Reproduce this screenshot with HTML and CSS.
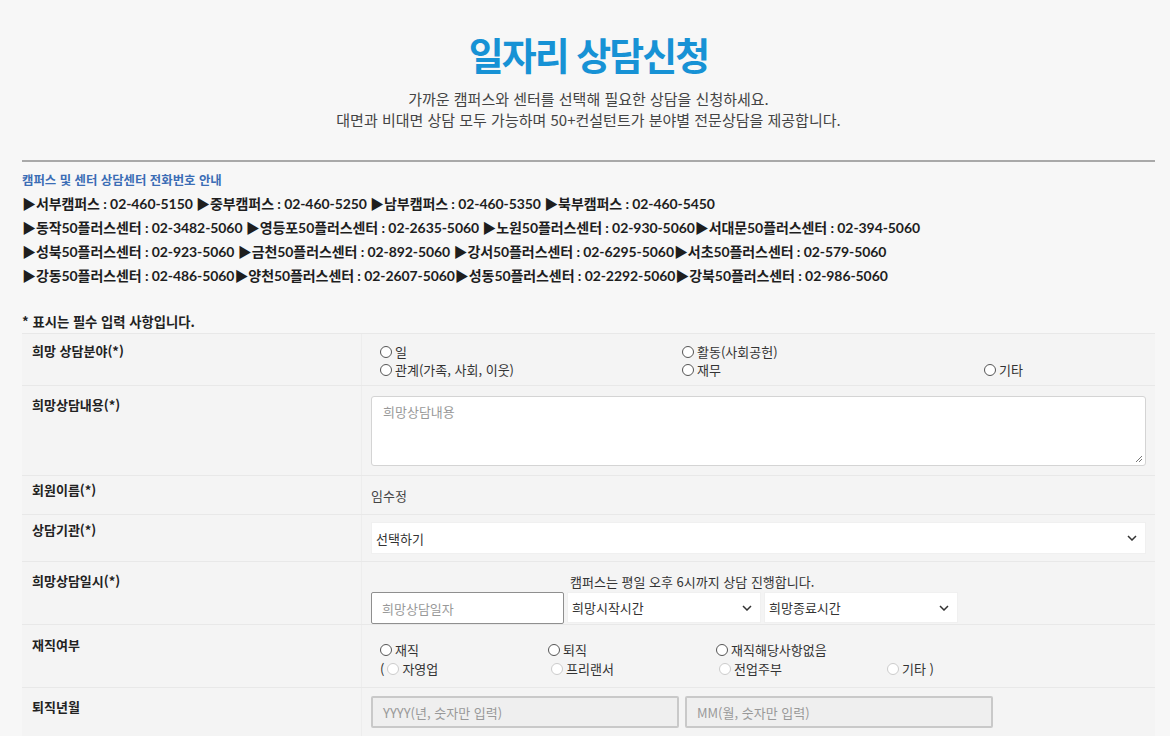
FILE: index.html
```html
<!DOCTYPE html>
<html lang="ko">
<head>
<meta charset="utf-8">
<title>일자리 상담신청</title>
<link rel="stylesheet" href="styles.css">
</head>
<body>
<div class="page">
  <header class="head">
    <h1 class="title">일자리 상담신청</h1>
    <p class="sub">가까운 캠퍼스와 센터를 선택해 필요한 상담을 신청하세요.<br>대면과 비대면 상담 모두 가능하며 50+컨설턴트가 분야별 전문상담을 제공합니다.</p>
  </header>
  <hr class="rule">
  <section class="info">
    <h2 class="info-title">캠퍼스 및 센터 상담센터 전화번호 안내</h2>
    <p class="phones">▶서부캠퍼스 : 02-460-5150 ▶중부캠퍼스 : 02-460-5250 ▶남부캠퍼스 : 02-460-5350 ▶북부캠퍼스 : 02-460-5450</p>
    <p class="phones">▶동작50플러스센터 : 02-3482-5060 ▶영등포50플러스센터 : 02-2635-5060 ▶노원50플러스센터 : 02-930-5060▶서대문50플러스센터 : 02-394-5060</p>
    <p class="phones">▶성북50플러스센터 : 02-923-5060 ▶금천50플러스센터 : 02-892-5060 ▶강서50플러스센터 : 02-6295-5060▶서초50플러스센터 : 02-579-5060</p>
    <p class="phones">▶강동50플러스센터 : 02-486-5060▶양천50플러스센터 : 02-2607-5060▶성동50플러스센터 : 02-2292-5060▶강북50플러스센터 : 02-986-5060</p>
  </section>
  <p class="req">* 표시는 필수 입력 사항입니다.</p>
  <div class="form">
    <div class="row r1">
      <div class="lbl">희망 상담분야(*)</div>
      <div class="val">
        <div class="radios three">
          <span class="opt"><i class="rd"></i>일</span>
          <span class="opt"><i class="rd"></i>활동(사회공헌)</span>
          <span class="opt"></span>
          <span class="opt"><i class="rd"></i>관계(가족, 사회, 이웃)</span>
          <span class="opt"><i class="rd"></i>재무</span>
          <span class="opt"><i class="rd"></i>기타</span>
        </div>
      </div>
    </div>
    <div class="row r2">
      <div class="lbl">희망상담내용(*)</div>
      <div class="val">
        <div class="textarea"><span class="ph">희망상담내용</span>
          <svg class="grip" width="8" height="8" viewBox="0 0 8 8"><path d="M7 1 L1 7 M7 4 L4 7" stroke="#777" stroke-width="1" fill="none"/></svg>
        </div>
      </div>
    </div>
    <div class="row r3">
      <div class="lbl">회원이름(*)</div>
      <div class="val"><span class="name">임수정</span></div>
    </div>
    <div class="row r4">
      <div class="lbl">상담기관(*)</div>
      <div class="val">
        <div class="select full"><span>선택하기</span>
          <svg width="10" height="6" viewBox="0 0 10 6"><path d="M1 1 L5 5 L9 1" stroke="#333" stroke-width="1.5" fill="none"/></svg>
        </div>
      </div>
    </div>
    <div class="row r5">
      <div class="lbl">희망상담일시(*)</div>
      <div class="val">
        <p class="note">캠퍼스는 평일 오후 6시까지 상담 진행합니다.</p>
        <div class="dates">
          <div class="input date"><span class="ph">희망상담일자</span></div>
          <div class="select time"><span>희망시작시간</span>
            <svg width="10" height="6" viewBox="0 0 10 6"><path d="M1 1 L5 5 L9 1" stroke="#333" stroke-width="1.5" fill="none"/></svg>
          </div>
          <div class="select time"><span>희망종료시간</span>
            <svg width="10" height="6" viewBox="0 0 10 6"><path d="M1 1 L5 5 L9 1" stroke="#333" stroke-width="1.5" fill="none"/></svg>
          </div>
        </div>
      </div>
    </div>
    <div class="row r6">
      <div class="lbl">재직여부</div>
      <div class="val">
        <div class="radios four">
          <span class="opt"><i class="rd"></i>재직</span>
          <span class="opt"><i class="rd"></i>퇴직</span>
          <span class="opt"><i class="rd"></i>재직해당사항없음</span>
          <span class="opt"></span>
          <span class="opt">(<i class="rd off"></i>자영업</span>
          <span class="opt"><i class="rd off"></i>프리랜서</span>
          <span class="opt"><i class="rd off"></i>전업주부</span>
          <span class="opt"><i class="rd off"></i>기타 )</span>
        </div>
      </div>
    </div>
    <div class="row r7">
      <div class="lbl">퇴직년월</div>
      <div class="val">
        <div class="ym">
          <div class="input grey"><span class="ph">YYYY(년, 숫자만 입력)</span></div>
          <div class="input grey"><span class="ph">MM(월, 숫자만 입력)</span></div>
        </div>
      </div>
    </div>
  </div>
</div>
</body>
</html>
```
FILE: styles.css
```css
html, body {
  margin: 0;
  padding: 0;
  background: #f7f7f7;
}
body {
  font-family: "Noto Sans CJK KR", "Noto Sans", sans-serif;
  color: #222;
}
.page {
  margin: 0 15px 0 22px;
}
.head {
  text-align: center;
  padding-top: 28px;
}
.title {
  margin: 0;
  font-size: 38px;
  line-height: 52px;
  font-weight: 700;
  color: #1792d5;
  letter-spacing: -2px;
}
.sub {
  margin: 8px 0 0;
  font-size: 15px;
  line-height: 21px;
  color: #444;
}
.rule {
  margin: 30px 0 0;
  border: 0;
  height: 2px;
  background: #a9a9a9;
}
.info {
  padding-top: 9px;
}
.info-title {
  margin: 0;
  font-size: 12.4px;
  line-height: 18px;
  color: #3b6db5;
  font-weight: 700;
}
.phones {
  margin: 0;
  font-family: "Lato", "Noto Sans CJK KR", sans-serif;
  font-weight: 700;
  font-size: 14px;
  line-height: 24px;
  color: #1e1e1e;
  white-space: nowrap;
  letter-spacing: -0.08px;
}
.info-title + .phones {
  margin-top: 3px;
}
.req {
  margin: 25px 0 0;
  font-size: 13.3px;
  line-height: 18px;
  font-weight: 700;
  color: #222;
}
.form {
  margin-top: 2px;
  background: #f4f4f4;
  border-top: 1px solid #e8e8e8;
}
.row {
  display: grid;
  grid-template-columns: 340px 1fr;
  border-bottom: 1px solid #e8e8e8;
}
.lbl {
  padding: 9px 10px 0;
  font-size: 13px;
  line-height: 18px;
  font-weight: 700;
  color: #222;
  border-right: 1px solid #ededed;
}
.val {
  padding: 0 9px;
  font-size: 13px;
  color: #333;
}
.radios {
  display: grid;
  margin-left: 9px;
  line-height: 18px;
}
.radios.three {
  grid-template-columns: 302px 302px 1fr;
}
.radios.four {
  grid-template-columns: 168px 168px 168px 1fr;
  line-height: 19px;
}
.opt {
  display: flex;
  align-items: center;
  white-space: nowrap;
}
.rd {
  display: inline-block;
  width: 10px;
  height: 10px;
  border: 1px solid #555;
  border-radius: 50%;
  margin-right: 3px;
  background: #fff;
}
.rd.off {
  border-color: #ccc;
  margin-left: 3px;
}
.r1 .lbl { padding-top: 8px; }
.r1 .val { padding-top: 9px; padding-bottom: 6px; }
.r2 .lbl { padding-top: 10px; }
.r2 .val { padding-top: 10px; padding-bottom: 9px; }
.textarea {
  height: 70px;
  background: #fff;
  border: 1px solid #d4d4d4;
  border-radius: 3px;
  padding: 6px 11px;
  box-sizing: border-box;
  display: flex;
  flex-direction: column;
  justify-content: space-between;
  line-height: 18px;
}
.grip {
  align-self: flex-end;
  margin-right: -9px;
  margin-bottom: -4px;
}
.ph {
  color: #999;
}
.r3 .lbl { padding-top: 5px; }
.r3 .val { padding-top: 11px; padding-bottom: 9px; line-height: 18px; }
.name { color: #444; }
.r4 .lbl { padding-top: 6px; }
.r4 .val { padding-top: 7px; padding-bottom: 7px; }
.select {
  height: 32px;
  box-sizing: border-box;
  background: #fff;
  border: 1px solid #f0f0f0;
  display: flex;
  align-items: center;
  justify-content: space-between;
  padding: 0 8px 0 4px;
  color: #333;
}
.r5 .lbl { padding-top: 10px; }
.r5 .val { padding-top: 11px; padding-bottom: 0; }
.note {
  margin: 0 0 1px 199px;
  line-height: 18px;
  color: #333;
}
.dates {
  display: flex;
  gap: 3px;
}
.input {
  height: 32px;
  box-sizing: border-box;
  display: flex;
  align-items: center;
  padding: 0 10px;
}
.input.date {
  width: 193px;
  background: #fff;
  border: 1px solid #8f8f8f;
  border-radius: 2px;
}
.select.time {
  width: 194px;
  height: 31px;
}
.r6 .lbl { padding-top: 11px; }
.r6 .val { padding-top: 15px; padding-bottom: 9px; }
.r7 .lbl { padding-top: 10px; }
.r7 .val { padding-top: 8px; padding-bottom: 10px; }
.ym {
  display: flex;
  gap: 6px;
}
.input.grey {
  width: 308px;
  background: #efefef;
  border: 2px solid #c9c9c9;
  border-radius: 2px;
}
```
